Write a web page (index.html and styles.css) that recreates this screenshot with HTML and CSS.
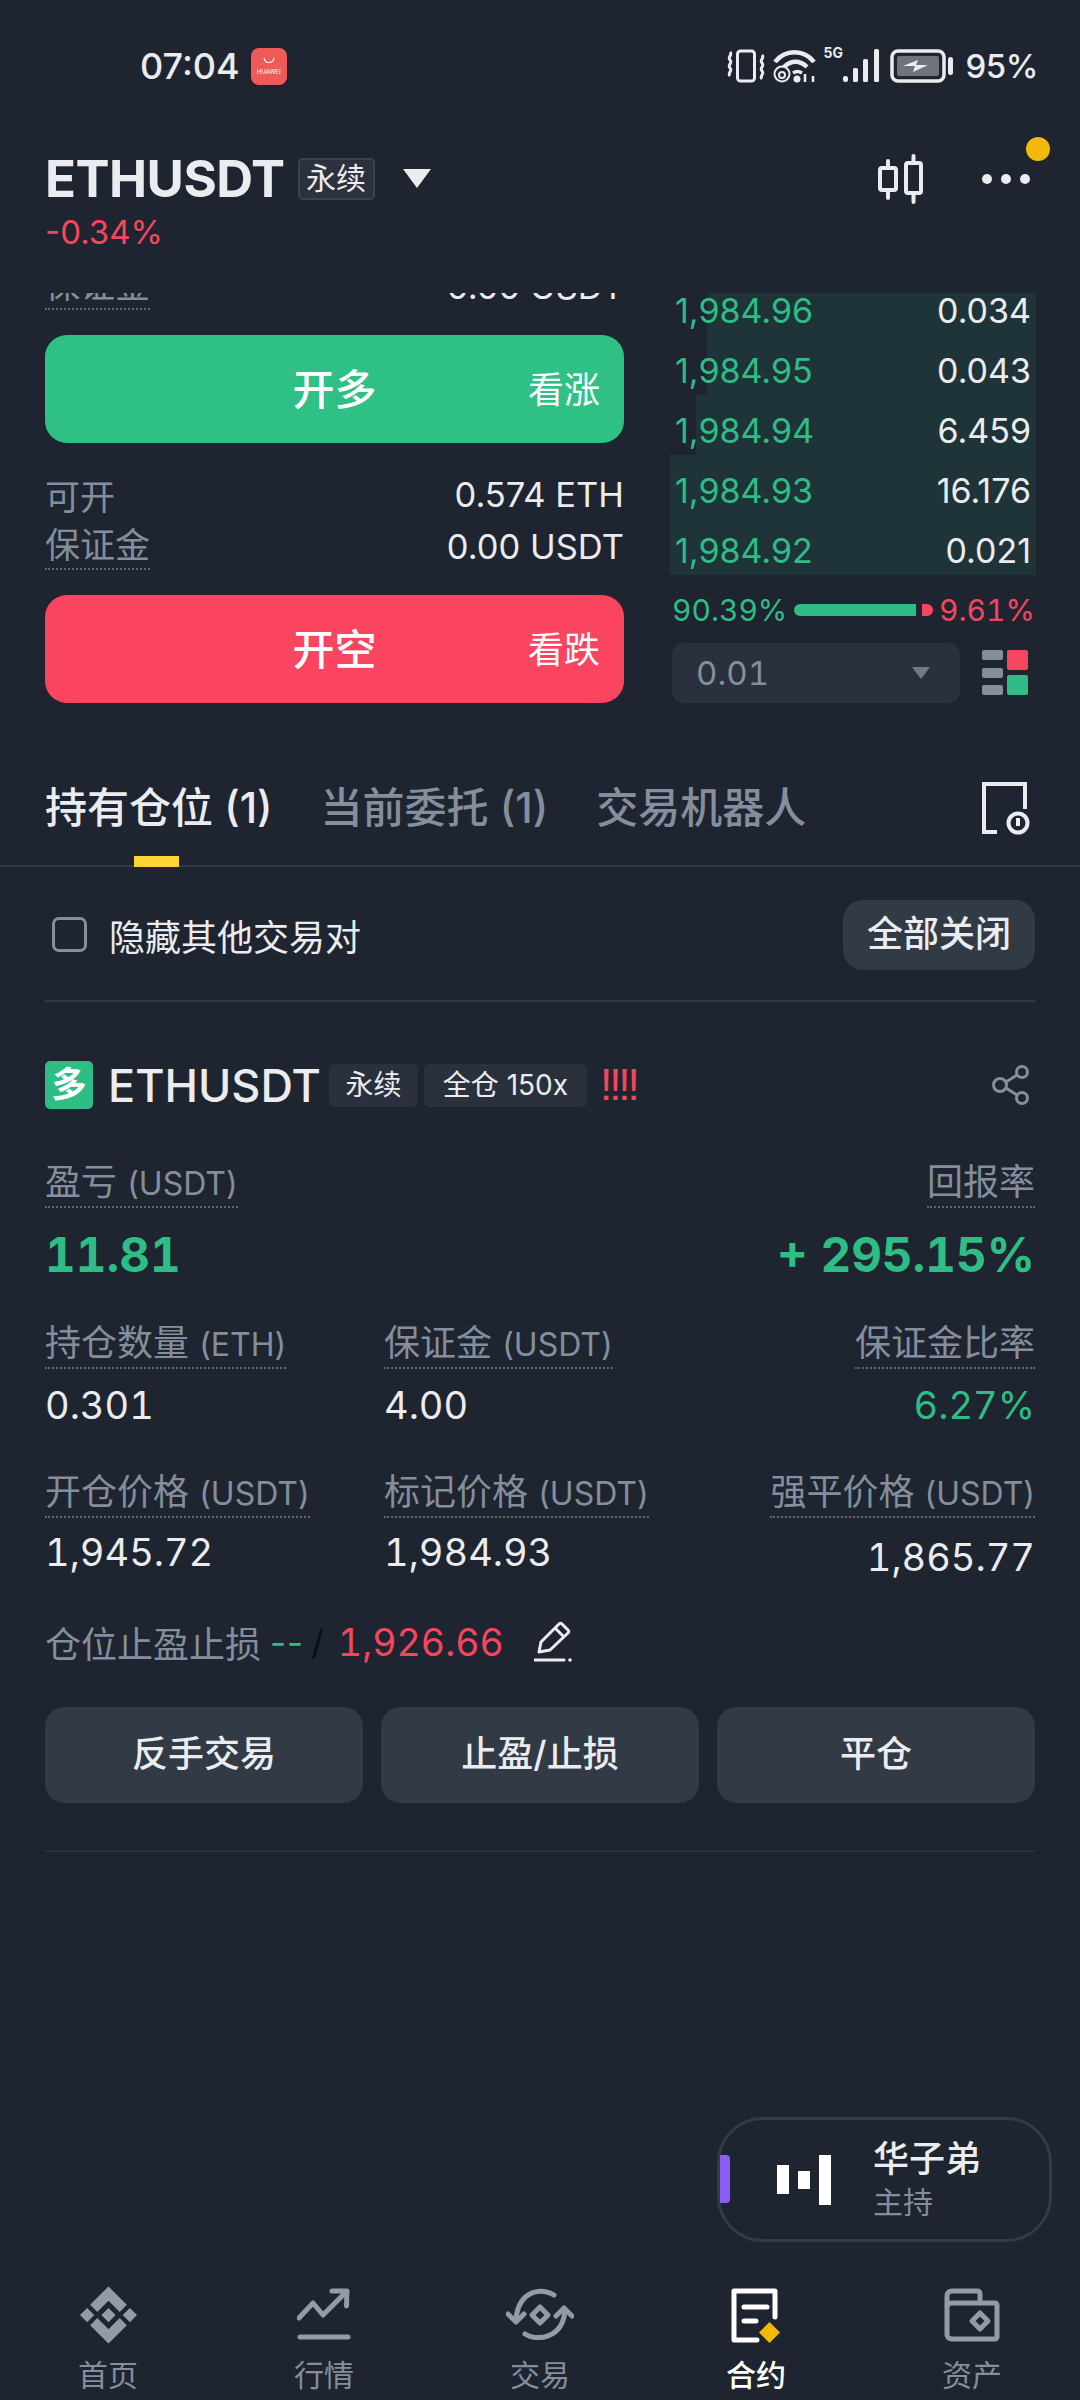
FILE: index.html
```html
<!DOCTYPE html>
<html lang="zh">
<head>
    <meta charset="UTF-8">
    <title>ETHUSDT 永续</title>
    <link rel="stylesheet" href="styles.css">
</head>
<body>
<div class="page">

    <!-- Barra de estado -->
    <div class="status">
        <span class="clock">07:04</span>
        <span class="store"><svg width="16" height="8" viewBox="0 0 16 8"><path d="M3 1c1 6 9 6 10 0" fill="none" stroke="#fff" stroke-width="1.2"/></svg><b>HUAWEI</b></span>
        <div class="status-right">
            <svg width="38" height="34" viewBox="0 0 38 34" fill="none" stroke="#eaecef" stroke-width="3"><rect x="10.500" y="2" width="17" height="30" rx="3"/><path d="M3 3c3 3-3 5 0 8s-3 5 0 8-3 5 0 8M35 6c3 3-3 5 0 8s-3 5 0 8-3 5 0 8"/></svg>
            <svg class="wifi" width="43" height="34" viewBox="0 0 43 34" fill="none" stroke="#eaecef"><path d="M2 13c10-13 29-13 39 0" stroke-width="4.500"/><path d="M11 18c7-7 16-7 23 0" stroke-width="4.500"/><path d="M20 24c3-2 6-2 9 0" stroke-width="3.500"/><circle cx="9" cy="25" r="7.500" stroke-width="2"/><circle cx="9" cy="26" r="3" stroke-width="2"/><circle cx="24" cy="30" r="3.500" fill="#eaecef" stroke="none"/><path d="M32 33v-8M40 33v-6" stroke-width="2.500"/></svg>
            <span class="five-g">5G</span>
            <svg class="signal" width="36" height="34" viewBox="0 0 36 34" fill="#eaecef"><rect x="0" y="27" width="5" height="6" rx="2"/><rect x="10" y="19" width="5" height="14" rx="1.500"/><rect x="20" y="10" width="5" height="23" rx="1.500"/><rect x="31" y="0" width="5" height="33" rx="1.500"/></svg>
            <svg class="battery" width="64" height="34" viewBox="0 0 64 34"><rect x="2" y="2" width="52" height="30" rx="6" fill="none" stroke="#eaecef" stroke-width="3.500"/><rect x="7" y="7" width="42" height="20" rx="2" fill="#6f747c"/><path d="M13 17l15-6-2 5h12l-15 7 2-6z" fill="#eaecef"/><rect x="58" y="8" width="5" height="18" rx="2.500" fill="#eaecef"/></svg>
            <span class="battery-pct">95%</span>
        </div>
    </div>

    <!-- Cabecera del par -->
    <div class="header">
        <div class="title-row">
            <span class="symbol">ETHUSDT</span>
            <span class="perp-tag">永续</span>
            <span class="caret"></span>
            <div class="header-icons">
                <svg width="46" height="50" viewBox="0 0 46 50" fill="none" stroke="#eaecef" stroke-width="4" stroke-linecap="round"><rect x="2" y="14" width="16" height="22" rx="2"/><path d="M10 7v7M10 36v8"/><rect x="28" y="9" width="15" height="30" rx="2"/><path d="M35.500 2v7M35.500 39v9"/></svg>
                <span class="dots"><i></i><i></i><i></i></span>
            </div>
        </div>
        <div class="change">-0.34%</div>
        <span class="notice-dot"></span>
    </div>

    <!-- Zona de orden y libro -->
    <div class="trade">
        <div class="order-col">
            <div class="field clipped"><span class="dotted">保证金</span><b>0.00 USDT</b></div>
            <div class="big-btn green"><span>开多</span><em>看涨</em></div>
            <div class="field first"><span>可开</span><b>0.574 ETH</b></div>
            <div class="field"><span class="dotted">保证金</span><b>0.00 USDT</b></div>
            <div class="big-btn red"><span>开空</span><em>看跌</em></div>
        </div>
        <div class="book-col">
            <div class="book">
                <div class="book-row"><i class="depth" style="width:329px"></i><span class="price">1,984.96</span><span class="qty">0.034</span></div>
                <div class="book-row"><i class="depth" style="width:329px"></i><span class="price">1,984.95</span><span class="qty">0.043</span></div>
                <div class="book-row"><i class="depth" style="width:340px"></i><span class="price">1,984.94</span><span class="qty">6.459</span></div>
                <div class="book-row"><i class="depth" style="width:366px"></i><span class="price">1,984.93</span><span class="qty">16.176</span></div>
                <div class="book-row"><i class="depth" style="width:366px"></i><span class="price">1,984.92</span><span class="qty">0.021</span></div>
            </div>
            <div class="ratio">
                <span class="up">90.39%</span>
                <div class="ratio-bar"><i class="ratio-buy"></i><i class="ratio-sell"></i></div>
                <span class="down">9.61%</span>
            </div>
            <div class="book-tools">
                <div class="precision"><span>0.01</span><i class="mini-caret"></i></div>
                <svg width="46" height="46" viewBox="0 0 46 46"><rect x="0" y="0" width="21" height="10" rx="2" fill="#848e9c"/><rect x="0" y="18" width="21" height="10" rx="2" fill="#848e9c"/><rect x="0" y="35" width="21" height="10" rx="2" fill="#848e9c"/><rect x="25" y="0" width="21" height="20" rx="2" fill="#f6465d"/><rect x="25" y="25" width="21" height="20" rx="2" fill="#2ebd85"/></svg>
            </div>
        </div>
    </div>

    <!-- Pestañas -->
    <div class="tabs">
        <span class="tab active">持有仓位 (1)<i class="tab-mark"></i></span>
        <span class="tab">当前委托 (1)</span>
        <span class="tab">交易机器人</span>
        <svg class="history" width="48" height="53" viewBox="0 0 48 53" fill="none" stroke="#eaecef" stroke-width="4"><path d="M15 50H2V2h41v25"/><circle cx="36" cy="41" r="9.500"/><path d="M36 36v8"/></svg>
    </div>

    <div class="filter">
        <span class="checkbox"></span>
        <span class="filter-label">隐藏其他交易对</span>
        <span class="close-all">全部关闭</span>
    </div>

    <!-- Posición -->
    <div class="position">
        <div class="pos-head">
            <span class="side">多</span>
            <span class="pos-symbol">ETHUSDT</span>
            <span class="tag">永续</span>
            <span class="tag wide">全仓 150x</span>
            <span class="risk">!!!!</span>
            <svg class="share" width="40" height="40" viewBox="0 0 40 40" fill="none" stroke="#848e9c" stroke-width="3"><circle cx="9" cy="20" r="6.500"/><circle cx="31" cy="7" r="5.500"/><circle cx="31" cy="33" r="5.500"/><path d="M15 17l11-7M15 23l11 7"/></svg>
        </div>

        <div class="stat-row pnl">
            <div class="stat"><span class="label">盈亏 <small>(USDT)</small></span><span class="pnl-val">11.81</span></div>
            <div class="stat right"><span class="label">回报率</span><span class="pnl-val">+ 295.15%</span></div>
        </div>
        <div class="stat-row second">
            <div class="stat"><span class="label">持仓数量 <small>(ETH)</small></span><span class="val">0.301</span></div>
            <div class="stat"><span class="label">保证金 <small>(USDT)</small></span><span class="val">4.00</span></div>
            <div class="stat right"><span class="label">保证金比率</span><span class="val up">6.27%</span></div>
        </div>
        <div class="stat-row third">
            <div class="stat"><span class="label">开仓价格 <small>(USDT)</small></span><span class="val">1,945.72</span></div>
            <div class="stat"><span class="label">标记价格 <small>(USDT)</small></span><span class="val">1,984.93</span></div>
            <div class="stat right"><span class="label">强平价格 <small>(USDT)</small></span><span class="val low">1,865.77</span></div>
        </div>

        <div class="tpsl">
            <span class="tpsl-label">仓位止盈止损</span>
            <span class="up tpsl-dash">--</span>
            <span class="slash">/</span>
            <span class="tpsl-price">1,926.66</span>
            <svg class="pencil" width="40" height="42" viewBox="0 0 40 42" fill="none" stroke="#eaecef" stroke-width="3"><path d="M5 31l2-10L25 3c1-1 2-1 3 0l6 6c1 1 1 2 0 3L16 29z" stroke-linejoin="round"/><path d="M21 7l9 9"/><path d="M0 39h30" stroke-linecap="round"/><circle cx="36" cy="39" r="1.800" fill="#eaecef" stroke="none"/></svg>
        </div>

        <div class="actions">
            <span class="action">反手交易</span>
            <span class="action">止盈/止损</span>
            <span class="action">平仓</span>
        </div>
        <div class="pos-line"></div>
    </div>

    <!-- Tarjeta flotante del directo -->
    <div class="live">
        <i class="live-mark"></i>
        <div class="live-bars"><i class="b1"></i><i class="b2"></i><i class="b3"></i></div>
        <div class="live-text"><b>华子弟</b><span>主持</span></div>
    </div>

    <!-- Navegación inferior -->
    <div class="nav">
        <div class="nav-item">
            <svg width="57" height="57" viewBox="0 0 56 56" fill="#949ba6"><path d="M28 0l18 18-7 7-11-11-11 11-7-7zM28 56L10 38l7-7 11 11 11-11 7 7zM28 21l7 7-7 7-7-7zM7 21l7 7-7 7-7-7zM49 21l7 7-7 7-7-7z"/></svg>
            <span>首页</span>
        </div>
        <div class="nav-item">
            <svg width="54" height="54" viewBox="0 0 54 54" fill="none" stroke="#949ba6" stroke-width="5" stroke-linecap="round" stroke-linejoin="round"><path d="M2 30l14-15 10 12L49 4M35 3h15l-.500 15"/><path d="M3 49h48"/></svg>
            <span>行情</span>
        </div>
        <div class="nav-item">
            <svg width="68" height="54" viewBox="0 0 68 54" fill="none" stroke="#949ba6" stroke-width="5" stroke-linecap="round" stroke-linejoin="round"><path d="M48 7C38 0 14 0 10 30M19 46c10 7 38 6 40-24"/><path d="M2 26l8 8 8-8M50 28l8-8 8 8"/><path d="M34 19l8 8-8 8-8-8z"/></svg>
            <span>交易</span>
        </div>
        <div class="nav-item active">
            <svg width="50" height="54" viewBox="0 0 50 54" fill="none" stroke="#fff" stroke-width="5" stroke-linecap="round" stroke-linejoin="round"><path d="M44 29V3H3v49h23"/><path d="M13 19h23M13 33h12"/><path d="M38.500 34l10.500 10.500-10.500 10.500-10.500-10.500z" fill="#f0b90b" stroke="none"/></svg>
            <span>合约</span>
        </div>
        <div class="nav-item">
            <svg width="56" height="54" viewBox="0 0 56 54" fill="none" stroke="#949ba6" stroke-width="5" stroke-linejoin="round"><path d="M3 47V8c0-3 2-5 5-5h25c2 0 3 1 3 3v9h15c1 0 2 1 2 2v32c0 1-1 2-2 2H8c-3 0-5-2-5-5z"/><path d="M3 19c0-3 2-4 5-4h28"/><path d="M36 25l8 8-8 8-8-8z"/></svg>
            <span>资产</span>
        </div>
    </div>
</div>
</body>
</html>
```

FILE: styles.css
```css
* {
    box-sizing: border-box;
}

body {
    margin: 0;
    background-color: #1e2530;
    color: #eaecef;
    font-family: Inter, "Noto Sans CJK SC", sans-serif;
}

.page {
    position: relative;
    display: flex;
    flex-direction: column;
    width: 1080px;
    height: 2400px;
    overflow: hidden;
}

i, em {
    font-style: normal;
}

.up {
    color: #2ebd85;
}

.down {
    color: #f6465d;
}

/* Barra de estado */
.status {
    display: flex;
    align-items: center;
    height: 132px;
    padding: 0 42px 0 140px;
    flex-shrink: 0;
}

.clock {
    font-size: 36px;
    font-weight: 500;
}

.store {
    display: flex;
    flex-direction: column;
    align-items: center;
    justify-content: center;
    gap: 3px;
    width: 36px;
    height: 37px;
    margin-left: 11px;
    background-color: #ee5a58;
    border-radius: 8px;
}

.store b {
    font-size: 6px;
    line-height: 7px;
    font-weight: 400;
    color: #fff;
}

.status-right {
    display: flex;
    align-items: center;
    margin-left: auto;
}

.wifi {
    margin-left: 8px;
}

.five-g {
    align-self: flex-start;
    width: 18px;
    margin-left: 8px;
    font-size: 14px;
    line-height: 14px;
    font-weight: 700;
}

.signal {
    margin-left: 1px;
}

.battery {
    margin-left: 11px;
}

.battery-pct {
    margin-left: 12px;
    font-size: 33px;
    letter-spacing: -0.5px;
    font-weight: 500;
}

/* Cabecera */
.header {
    position: relative;
    height: 161px;
    padding: 22px 45px 0;
    flex-shrink: 0;
}

.title-row {
    display: flex;
    align-items: center;
    height: 48px;
}

.symbol {
    font-size: 51px;
    font-weight: 700;
    letter-spacing: -0.5px;
}

.perp-tag {
    margin: 2px 0 0 13px;
    width: 77px;
    height: 42px;
    line-height: 37px;
    text-align: center;
    font-size: 30px;
    background-color: #2b323d;
    border: 2px solid #3b434f;
    border-radius: 5px;
}

.caret {
    width: 0;
    height: 0;
    margin-left: 28px;
    border-left: 14px solid transparent;
    border-right: 14px solid transparent;
    border-top: 19px solid #eaecef;
}

.header-icons {
    display: flex;
    align-items: center;
    gap: 58px;
    margin: 2px 5px 0 auto;
}

.dots {
    display: flex;
    gap: 9px;
}

.dots i {
    width: 10px;
    height: 10px;
    background-color: #eaecef;
    border-radius: 50%;
}

.change {
    margin-top: 10px;
    font-size: 33px;
    line-height: 40px;
    color: #f6465d;
}

.notice-dot {
    position: absolute;
    top: 5px;
    left: 1026px;
    width: 24px;
    height: 24px;
    background-color: #f0b90b;
    border-radius: 50%;
}

/* Orden y libro */
.trade {
    display: flex;
    gap: 46px;
    height: 416px;
    padding-left: 45px;
    overflow: hidden;
    flex-shrink: 0;
}

.order-col {
    width: 579px;
    margin-top: -33px;
}

.field {
    display: flex;
    justify-content: space-between;
    align-items: center;
    height: 52px;
    font-size: 35px;
    color: #848e9c;
}

.field.first {
    margin-top: 25px;
}

.field b {
    font-size: 34.500px;
    font-weight: 400;
    color: #eaecef;
}

.dotted {
    border-bottom: 2px dotted #5e6673;
    line-height: 46px;
}

.big-btn {
    position: relative;
    display: flex;
    justify-content: center;
    align-items: center;
    height: 108px;
    margin-top: 23px;
    padding-bottom: 5px;
    border-radius: 22px;
    color: #fff;
    font-size: 42px;
    font-weight: 500;
}

.big-btn em {
    position: absolute;
    right: 24px;
    font-size: 36px;
    font-weight: 400;
}

.green {
    background-color: #2fc086;
}

.red {
    background-color: #fb4560;
}

.book-col {
    width: 366px;
}

.book {
    margin-top: -18px;
    font-size: 34px;
}

.book-row {
    position: relative;
    display: flex;
    justify-content: space-between;
    height: 60px;
    padding: 13px 5px 0 5px;
    line-height: 46px;
}

.depth {
    position: absolute;
    top: 0;
    right: 0;
    bottom: 0;
    background-color: rgba(46, 189, 133, 0.1);
}

.price {
    position: relative;
    color: #2ebd85;
}

.qty {
    position: relative;
}

.ratio {
    display: flex;
    align-items: center;
    justify-content: space-between;
    height: 36px;
    margin: 17px 1px 0 2px;
    font-size: 30px;
    font-variant-numeric: tabular-nums;
}

.ratio-bar {
    display: flex;
    gap: 6px;
    width: 139px;
}

.ratio-buy {
    width: 122px;
    height: 12px;
    background-color: #2ebd85;
    border-radius: 6px 0 0 6px;
}

.ratio-sell {
    width: 11px;
    height: 12px;
    background-color: #f6465d;
    border-radius: 0 6px 6px 0;
}

.book-tools {
    display: flex;
    align-items: center;
    margin: 15px 0 0 2px;
}

.book-tools svg {
    margin-left: 22px;
}

.precision {
    display: flex;
    align-items: center;
    justify-content: space-between;
    width: 288px;
    height: 60px;
    padding: 0 30px 0 24px;
    background-color: #2a303c;
    border-radius: 12px;
    font-size: 33px;
    font-variant-numeric: tabular-nums;
    color: #848e9c;
}

.mini-caret {
    width: 0;
    height: 0;
    border-left: 9px solid transparent;
    border-right: 9px solid transparent;
    border-top: 12px solid #717a88;
}

/* Pestañas */
.tabs {
    display: flex;
    align-items: flex-start;
    height: 158px;
    padding: 71px 50px 0 45px;
    border-bottom: 2px solid #333a45;
    flex-shrink: 0;
}

.tab {
    position: relative;
    margin-right: 48px;
    font-size: 42px;
    line-height: 56px;
    font-weight: 500;
    color: #848e9c;
}

.tab.active {
    color: #eaecef;
}

.tab-mark {
    position: absolute;
    left: 89px;
    top: 76px;
    width: 45px;
    height: 11px;
    background-color: #fcd535;
}

.history {
    margin: 2px 0 0 auto;
}

.filter {
    display: flex;
    align-items: center;
    height: 135px;
    margin: 0 45px;
    padding-top: 2px;
    border-bottom: 2px solid #333a45;
    flex-shrink: 0;
}

.checkbox {
    width: 35px;
    height: 35px;
    margin-left: 7px;
    border: 3px solid #848e9c;
    border-radius: 7px;
}

.filter-label {
    margin-left: 22px;
    font-size: 36px;
}

.close-all {
    margin-left: auto;
    width: 192px;
    height: 70px;
    line-height: 68px;
    text-align: center;
    font-size: 36px;
    font-weight: 500;
    background-color: #323a45;
    border-radius: 20px;
}

/* Posición */
.position {
    padding: 59px 45px 0;
}

.pos-head {
    display: flex;
    align-items: center;
    height: 48px;
}

.side {
    width: 48px;
    height: 48px;
    line-height: 46px;
    text-align: center;
    font-size: 35px;
    font-weight: 700;
    color: #fff;
    background-color: #2ebd85;
    border-radius: 5px;
}

.pos-symbol {
    margin-left: 15px;
    font-size: 45px;
    font-weight: 500;
}

.tag {
    width: 89px;
    height: 43px;
    margin-left: 8px;
    line-height: 43px;
    text-align: center;
    font-size: 28px;
    background-color: #2a303c;
    border-radius: 5px;
}

.tag.wide {
    width: 163px;
    margin-left: 6px;
}

.risk {
    margin-left: 13px;
    font-family: "Liberation Sans", sans-serif;
    font-size: 44px;
    line-height: 48px;
    letter-spacing: -3px;
    color: #f6465d;
}

.share {
    margin-left: auto;
    margin-right: 4px;
}

.stat-row {
    display: grid;
    grid-template-columns: 339px 1fr auto;
}

.stat-row.pnl {
    grid-template-columns: 1fr auto;
    margin-top: 51px;
}

.stat-row.second {
    margin-top: 36px;
}

.stat-row.third {
    margin-top: 40px;
}

.stat {
    display: flex;
    flex-direction: column;
    align-items: flex-start;
}

.stat.right {
    align-items: flex-end;
}

.label {
    height: 48px;
    padding-bottom: 2px;
    line-height: 44px;
    font-size: 36px;
    color: #848e9c;
    border-bottom: 2px dotted #5e6673;
}

.label small {
    font-size: 32px;
}

.pnl-val {
    margin-top: 17px;
    line-height: 60px;
    font-size: 47.500px;
    font-weight: 700;
    font-variant-numeric: tabular-nums;
    color: #2ebd85;
}

.val {
    margin-top: 11px;
    line-height: 50px;
    font-size: 38px;
    font-variant-numeric: tabular-nums;
}

.third .val {
    margin-top: 9px;
}

.third .val.low {
    margin-top: 14px;
}

.tpsl {
    display: flex;
    align-items: center;
    height: 50px;
    margin-top: 35px;
}

.tpsl-label {
    font-size: 36px;
    color: #848e9c;
}

.tpsl-dash {
    margin-left: 9px;
    font-size: 35px;
    letter-spacing: 1px;
}

.slash {
    margin-left: 7px;
    font-size: 35px;
    color: #0b0e11;
}

.tpsl-price {
    margin-left: 14px;
    font-size: 37.500px;
    font-variant-numeric: tabular-nums;
    color: #f6465d;
}

.pencil {
    margin-left: 30px;
}

.actions {
    display: flex;
    gap: 18px;
    margin-top: 40px;
}

.action {
    flex: 1;
    height: 96px;
    line-height: 94px;
    text-align: center;
    font-size: 36px;
    font-weight: 500;
    background-color: #323a45;
    border-radius: 20px;
}

.pos-line {
    height: 2px;
    margin-top: 47px;
    background-color: #2a303c;
}

/* Tarjeta flotante */
.live {
    position: absolute;
    top: 2117px;
    left: 717px;
    display: flex;
    align-items: center;
    width: 335px;
    height: 125px;
    border: 3px solid #343b46;
    border-radius: 46px;
}

.live-mark {
    position: absolute;
    left: 0;
    top: 35px;
    width: 10px;
    height: 48px;
    background-color: #8b5cf6;
    border-radius: 0 4px 4px 0;
}

.live-bars {
    display: flex;
    align-items: center;
    gap: 9px;
    margin-left: 57px;
}

.live-bars i {
    width: 12px;
    background-color: #fff;
}

.live-bars .b1 {
    height: 29px;
}

.live-bars .b2 {
    height: 18px;
}

.live-bars .b3 {
    height: 50px;
}

.live-text {
    display: flex;
    flex-direction: column;
    margin-left: 42px;
}

.live-text b {
    font-size: 36px;
    line-height: 44px;
    font-weight: 500;
}

.live-text span {
    font-size: 30px;
    line-height: 42px;
    color: #848e9c;
}

/* Navegación inferior */
.nav {
    display: flex;
    height: 116px;
    margin-top: auto;
    flex-shrink: 0;
}

.nav-item {
    flex: 1;
    display: flex;
    flex-direction: column;
    align-items: center;
    justify-content: flex-start;
    font-size: 30px;
    color: #848e9c;
}

.nav-item svg {
    height: 58px;
    margin-top: 2px;
}

.nav-item span {
    margin-top: 11px;
    line-height: 40px;
}

.nav-item.active {
    color: #fff;
    font-weight: 500;
}
```
